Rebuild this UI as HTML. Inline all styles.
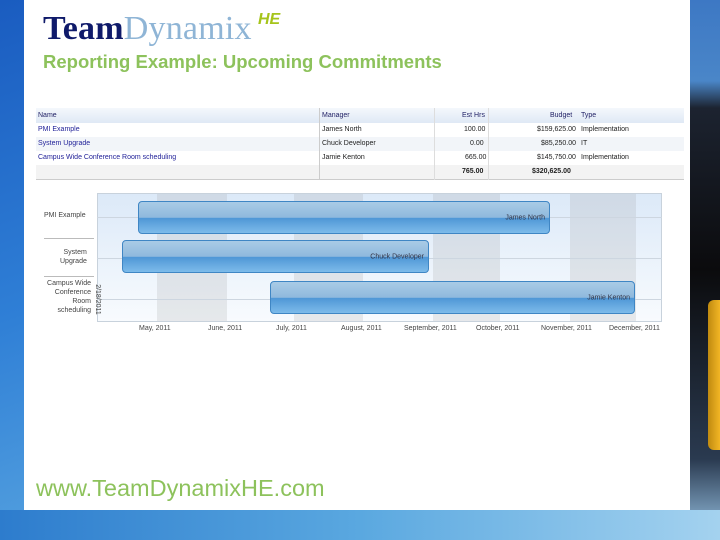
<!DOCTYPE html>
<html><head><meta charset="utf-8"><style>
*{margin:0;padding:0;box-sizing:border-box}
body{width:720px;height:540px;overflow:hidden;position:relative;font-family:"Liberation Sans",sans-serif;
background:linear-gradient(160deg,#1a5cc0 0%,#2f7fd6 40%,#5aa6e0 75%,#8cc6ec 100%)}
.abs{position:absolute}
#panel{left:24px;top:0;width:666px;height:510px;background:#fff}
.t{font-size:7px;color:#222;white-space:nowrap;position:absolute}
.bar{position:absolute;border-radius:4px;border:1px solid #3f86c4;
background:linear-gradient(#a9cbe6 0%,#8fb9dd 50%,#4f97d6 52%,#7dbbea 100%)}
.bar span{position:absolute;right:4px;top:50%;transform:translateY(-50%);font-size:7px;color:#334}
</style></head><body>
<div class="abs" style="left:690px;top:0;width:30px;height:540px;background:linear-gradient(#3d78c4 0%,#4a86c8 15%,#1c2330 20%,#0b0b0d 50%,#2a3a50 85%,#9cc8ea 100%)"></div>
<div class="abs" style="left:708px;top:300px;width:12px;height:150px;background:linear-gradient(90deg,#c08a10,#f2b625);border-radius:6px 0 0 6px"></div>
<div class="abs" style="left:0;top:510px;width:720px;height:30px;background:linear-gradient(90deg,#2d7ccd,#5aa8e0 50%,#a4d2ef)"></div>
<div id="panel" class="abs"></div>
<div class="abs" style="left:43px;top:9px;font-family:'Liberation Serif',serif;font-size:34px;letter-spacing:0.2px;white-space:nowrap;line-height:40px"><span style="color:#0f1a6a;font-weight:bold">Team</span><span style="color:#8fb5d6">Dynamix</span></div>
<div class="abs" style="left:258px;top:11px;color:#a6c41b;font-weight:bold;font-style:italic;font-size:16px">HE</div>
<div class="abs" style="left:43px;top:51px;color:#8dc25c;font-weight:bold;font-size:18.5px;white-space:nowrap">Reporting Example: Upcoming Commitments</div>
<div class="abs" style="left:36px;top:108px;width:648px;height:15px;background:linear-gradient(#f4f8fc,#dfe9f5)"></div>
<div class="abs" style="left:36px;top:137px;width:648px;height:14px;background:#f2f5f9"></div>
<div class="abs" style="left:36px;top:165px;width:648px;height:15px;background:#f3f3f3;border-bottom:1px solid #ccc"></div>
<div class="abs" style="left:319px;top:108px;width:1px;height:72px;background:#ccc"></div>
<div class="abs" style="left:434px;top:108px;width:1px;height:72px;background:#ddd"></div>
<div class="abs" style="left:488px;top:108px;width:1px;height:72px;background:#ddd"></div>
<div class="t" style="left:38px;top:112px;color:#226">Name</div>
<div class="t" style="left:322px;top:112px;color:#226">Manager</div>
<div class="t" style="left:462px;top:112px;color:#226">Est Hrs</div>
<div class="t" style="left:550px;top:112px;color:#226">Budget</div>
<div class="t" style="left:581px;top:112px;color:#226">Type</div>
<div class="t" style="left:38px;top:126px;color:#229">PMI Example</div>
<div class="t" style="left:322px;top:126px">James North</div>
<div class="t" style="left:464px;top:126px">100.00</div>
<div class="t" style="left:537px;top:126px">$159,625.00</div>
<div class="t" style="left:581px;top:126px">Implementation</div>
<div class="t" style="left:38px;top:140px;color:#229">System Upgrade</div>
<div class="t" style="left:322px;top:140px">Chuck Developer</div>
<div class="t" style="left:470px;top:140px">0.00</div>
<div class="t" style="left:541px;top:140px">$85,250.00</div>
<div class="t" style="left:581px;top:140px">IT</div>
<div class="t" style="left:38px;top:154px;color:#229">Campus Wide Conference Room scheduling</div>
<div class="t" style="left:322px;top:154px">Jamie Kenton</div>
<div class="t" style="left:465px;top:154px">665.00</div>
<div class="t" style="left:537px;top:154px">$145,750.00</div>
<div class="t" style="left:581px;top:154px">Implementation</div>
<div class="t" style="left:462px;top:168px;font-weight:bold">765.00</div>
<div class="t" style="left:532px;top:168px;font-weight:bold">$320,625.00</div>
<div class="abs" style="left:97px;top:193px;width:565px;height:129px;border:1px solid #c8d2dc;background:linear-gradient(#dce9f8,#f8fbfe)"></div>
<div class="abs" style="left:157px;top:194px;width:70px;height:127px;background:rgba(150,150,150,.18)"></div>
<div class="abs" style="left:294px;top:194px;width:69px;height:127px;background:rgba(150,150,150,.18)"></div>
<div class="abs" style="left:433px;top:194px;width:67px;height:127px;background:rgba(150,150,150,.18)"></div>
<div class="abs" style="left:570px;top:194px;width:66px;height:127px;background:rgba(150,150,150,.18)"></div>
<div class="abs" style="left:97px;top:217px;width:565px;height:1px;background:#cdd6e0"></div>
<div class="abs" style="left:97px;top:258px;width:565px;height:1px;background:#cdd6e0"></div>
<div class="abs" style="left:97px;top:299px;width:565px;height:1px;background:#cdd6e0"></div>
<div class="abs" style="left:44px;top:238px;width:50px;height:1px;background:#bbb"></div>
<div class="abs" style="left:44px;top:276px;width:50px;height:1px;background:#bbb"></div>
<div class="t" style="left:44px;top:212px;color:#444">PMI Example</div>
<div class="t" style="left:60px;top:248px;color:#444;text-align:right;line-height:9px">System<br>Upgrade</div>
<div class="t" style="left:40px;top:279px;color:#444;text-align:right;line-height:9px;width:51px">Campus Wide<br>Conference<br>Room<br>scheduling</div>
<div class="t" style="left:82px;top:296px;color:#444;transform:rotate(90deg);transform-origin:center">2/18/2011</div>
<div class="bar" style="left:138px;top:201px;width:412px;height:33px"><span>James North</span></div>
<div class="bar" style="left:122px;top:240px;width:307px;height:33px"><span>Chuck Developer</span></div>
<div class="bar" style="left:270px;top:281px;width:365px;height:33px"><span>Jamie Kenton</span></div>
<div class="t" style="left:139px;top:325px;color:#444">May, 2011</div>
<div class="t" style="left:208px;top:325px;color:#444">June, 2011</div>
<div class="t" style="left:276px;top:325px;color:#444">July, 2011</div>
<div class="t" style="left:341px;top:325px;color:#444">August, 2011</div>
<div class="t" style="left:404px;top:325px;color:#444">September, 2011</div>
<div class="t" style="left:476px;top:325px;color:#444">October, 2011</div>
<div class="t" style="left:541px;top:325px;color:#444">November, 2011</div>
<div class="t" style="left:609px;top:325px;color:#444">December, 2011</div>
<div class="abs" style="left:36px;top:475px;color:#8dc25c;font-size:23.5px;white-space:nowrap">www.TeamDynamixHE.com</div>
</body></html>
